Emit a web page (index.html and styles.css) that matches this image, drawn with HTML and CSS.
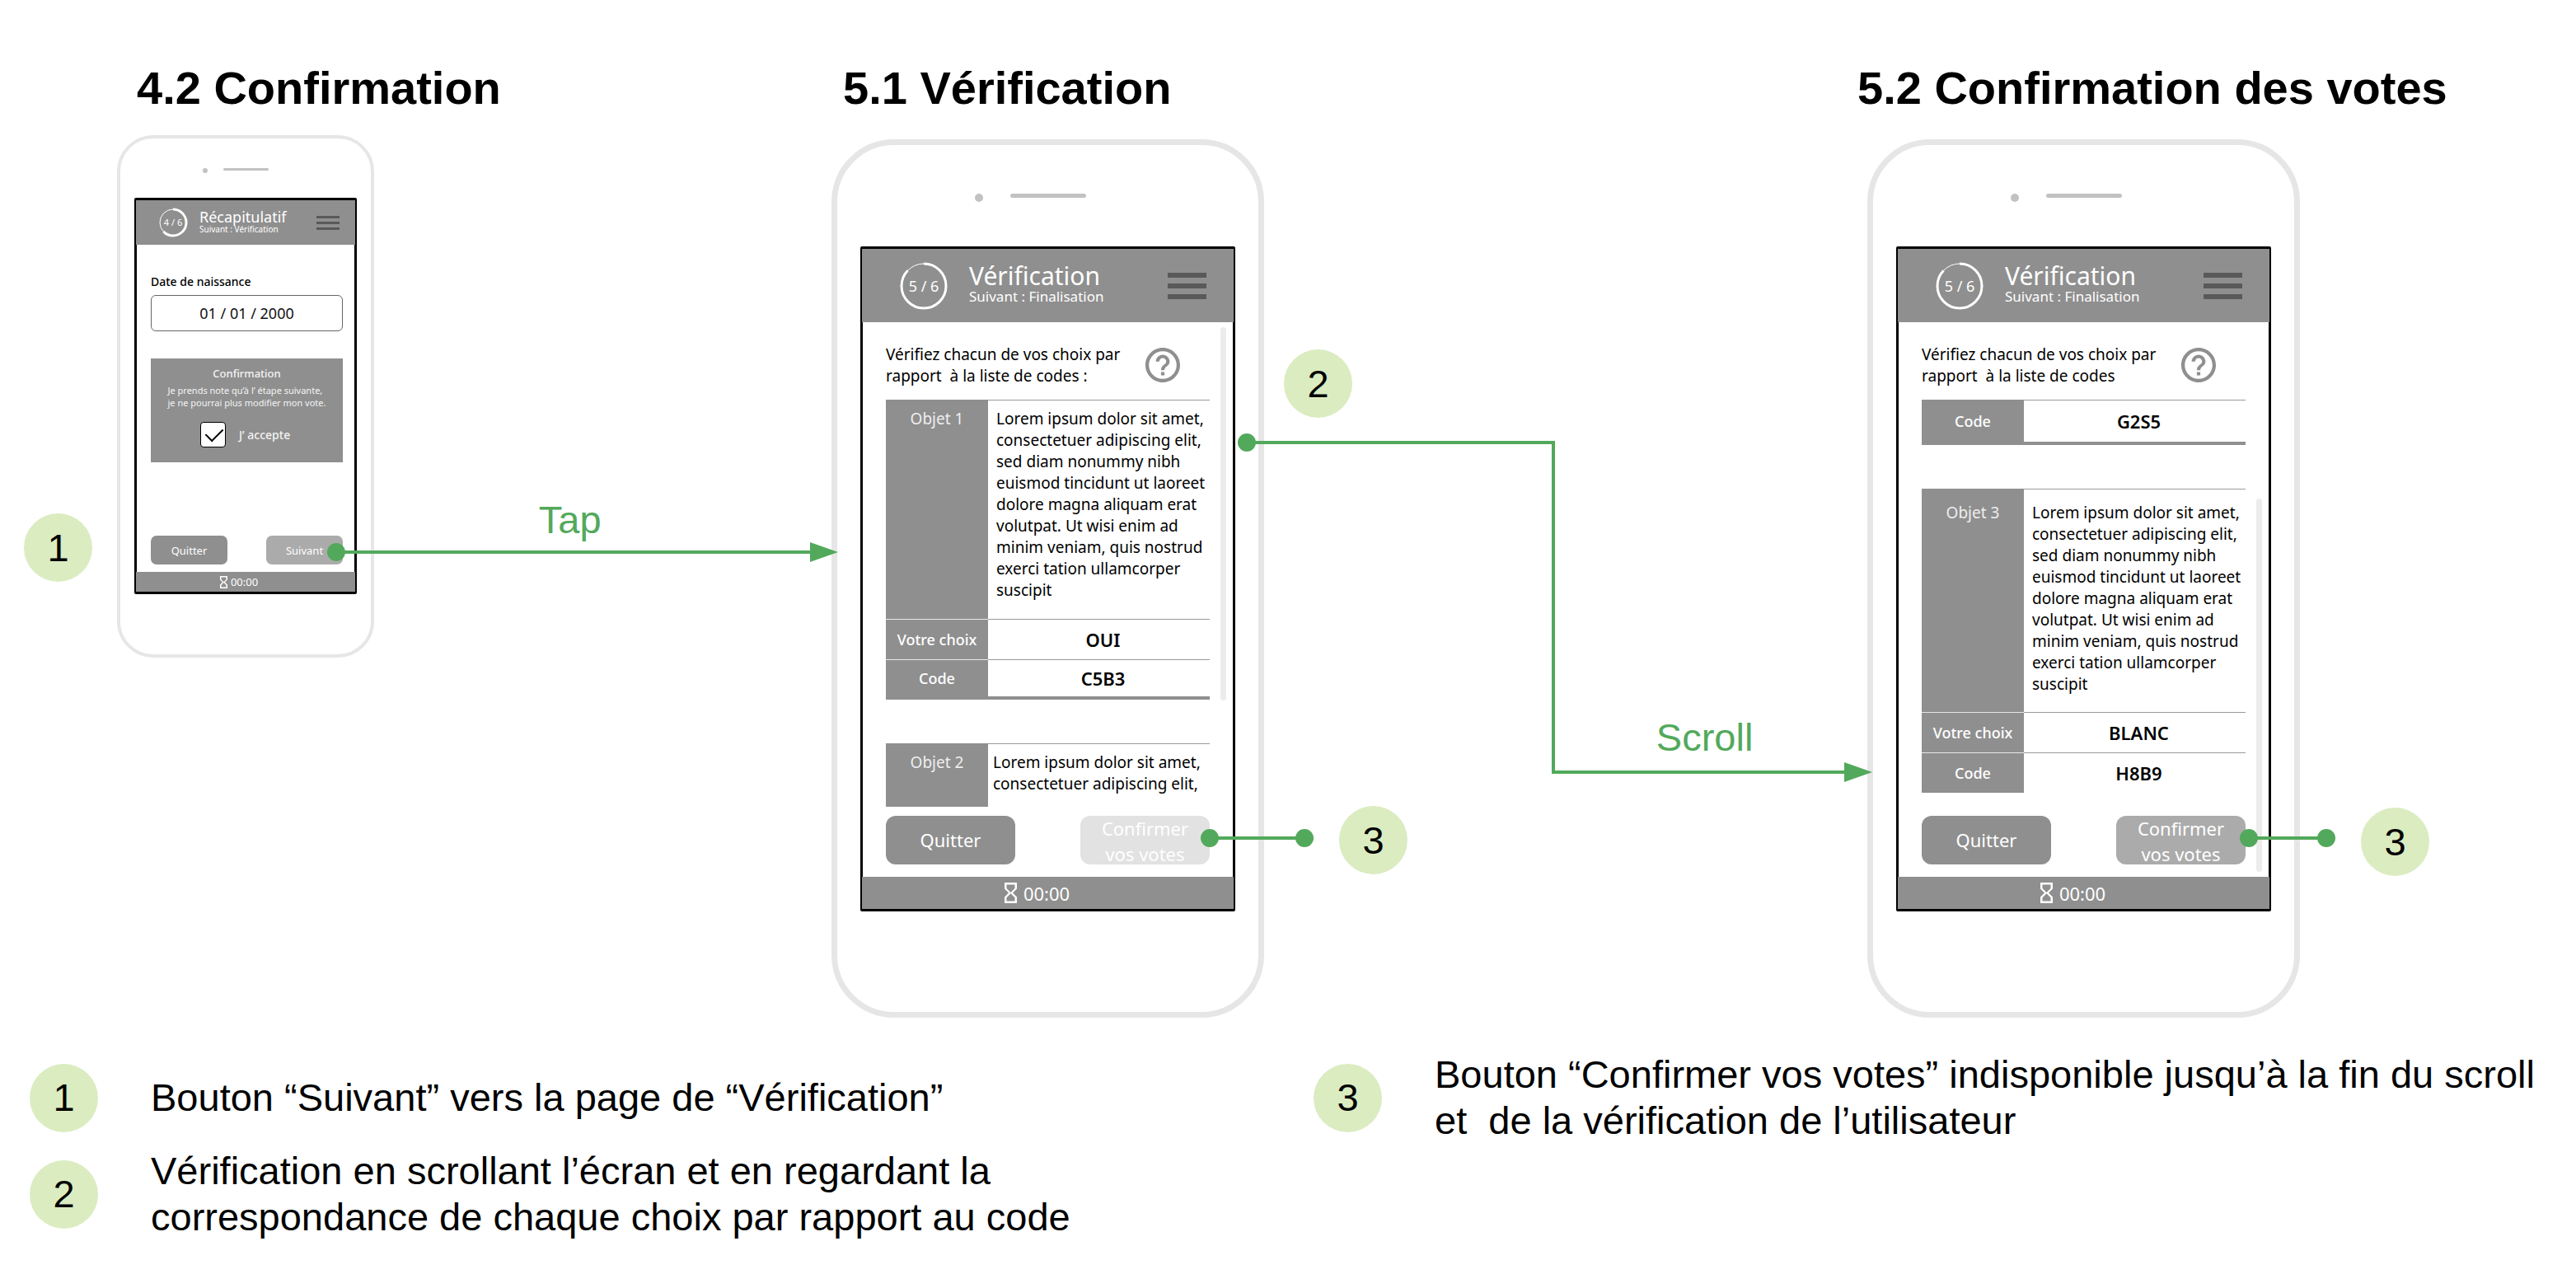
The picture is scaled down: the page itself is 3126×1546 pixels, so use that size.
FILE: index.html
```html
<!DOCTYPE html>
<html lang="fr">
<head>
<meta charset="utf-8">
<title>Parcours de vote : vérification</title>
<link rel="stylesheet" href="styles.css">
</head>
<body>
<svg width="0" height="0" class="defs" aria-hidden="true">
  <symbol id="help" viewBox="2 2 20 20"><path d="M11 18h2v-2h-2v2zm1-16C6.48 2 2 6.48 2 12s4.48 10 10 10 10-4.48 10-10S17.52 2 12 2zm0 18c-4.41 0-8-3.59-8-8s3.59-8 8-8 8 3.59 8 8-3.59 8-8 8zm0-14c-2.21 0-4 1.79-4 4h2c0-1.1.9-2 2-2s2 .9 2 2c0 2-3 1.75-3 5h2c0-2.25 3-2.5 3-5 0-2.21-1.79-4-4-4z"/></symbol>
  <symbol id="hourglass" viewBox="6 2 12 20"><path d="M6 2v6h.01L6 8.01 10 12l-4 4 .01.01H6V22h12v-5.99h-.01L18 16l-4-4 4-3.99-.01-.01H18V2H6zm10 14.5V20H8v-3.5l4-4 4 4zm-4-5l-4-4V4h8v3.5l-4 4z"/></symbol>
</svg>
<main>
  <div class="flow">
    <h2 class="title title-a">4.2 Confirmation</h2>
    <h2 class="title title-b">5.1 Vérification</h2>
    <h2 class="title title-c">5.2 Confirmation des votes</h2>

    <div class="lane lane-start"><span class="badge at-start">1</span></div>

    <section class="phone small">
      <div class="speaker"><i class="camera"></i><i class="slot"></i></div>
      <div class="screen">
        <header class="bar">
          <div class="step">
            <svg viewBox="0 0 36 36"><circle cx="18" cy="18" r="16" class="thin"/><circle cx="18" cy="18" r="16" class="thick" pathLength="360" stroke-dasharray="226 134" transform="rotate(-90 18 18)"/></svg>
            <span>4 / 6</span>
          </div>
          <div class="heading"><h3>Récapitulatif</h3><p>Suivant : Vérification</p></div>
          <button class="menu" aria-label="Menu"><i></i><i></i><i></i></button>
        </header>
        <div class="content">
          <label class="field-label" for="birth">Date de naissance</label>
          <input class="field" id="birth" type="text" value="01 / 01 / 2000">
          <div class="panel">
            <h4>Confirmation</h4>
            <p>Je prends note qu’à l’ étape suivante,<br>je ne pourrai plus modifier mon vote.</p>
            <label class="accept"><input type="checkbox" checked><span>J’ accepte</span></label>
          </div>
          <div class="actions"><button class="btn">Quitter</button><button class="btn next">Suivant</button></div>
        </div>
        <footer class="timer"><svg><use href="#hourglass"/></svg><span>00:00</span></footer>
      </div>
    </section>

    <div class="lane lane-tap">
      <div class="link tap"></div>
      <span class="gesture tap-text">Tap</span>
    </div>

    <section class="phone large">
      <div class="speaker"><i class="camera"></i><i class="slot"></i></div>
      <div class="screen">
        <header class="bar">
          <div class="step">
            <svg viewBox="0 0 60 60"><circle cx="30" cy="30" r="27" class="thin"/><circle cx="30" cy="30" r="27" class="thick" pathLength="360" stroke-dasharray="314 46" transform="rotate(-90 30 30)"/></svg>
            <span>5 / 6</span>
          </div>
          <div class="heading"><h3>Vérification</h3><p>Suivant : Finalisation</p></div>
          <button class="menu" aria-label="Menu"><i></i><i></i><i></i></button>
        </header>
        <div class="content">
          <div class="intro"><p>Vérifiez chacun de vos choix par<br>rapport&nbsp; à la liste de codes :</p><button class="help" aria-label="Aide"><svg><use href="#help"/></svg></button></div>
          <table class="vote closed">
            <tr class="object"><th>Objet 1</th><td>Lorem ipsum dolor sit amet,<br>consectetuer adipiscing elit,<br>sed diam nonummy nibh<br>euismod tincidunt ut laoreet<br>dolore magna aliquam erat<br>volutpat. Ut wisi enim ad<br>minim veniam, quis nostrud<br>exerci tation ullamcorper<br>suscipit</td></tr>
            <tr><th>Votre choix</th><td>OUI</td></tr>
            <tr><th>Code</th><td>C5B3</td></tr>
          </table>
          <table class="vote">
            <tr class="object cut"><th>Objet 2</th><td>Lorem ipsum dolor sit amet,<br>consectetuer adipiscing elit,</td></tr>
          </table>
          <div class="actions"><button class="btn">Quitter</button><button class="btn off" disabled>Confirmer<br>vos votes</button></div>
          <i class="scrollbar top"></i>
        </div>
        <footer class="timer"><svg><use href="#hourglass"/></svg><span>00:00</span></footer>
      </div>
    </section>

    <div class="lane lane-scroll">
      <span class="badge at-scroll">2</span>
      <div class="link down"></div>
      <div class="link across"></div>
      <span class="gesture scroll-text">Scroll</span>
      <div class="link note"></div>
      <span class="badge at-disabled">3</span>
    </div>

    <section class="phone large">
      <div class="speaker"><i class="camera"></i><i class="slot"></i></div>
      <div class="screen">
        <header class="bar">
          <div class="step">
            <svg viewBox="0 0 60 60"><circle cx="30" cy="30" r="27" class="thin"/><circle cx="30" cy="30" r="27" class="thick" pathLength="360" stroke-dasharray="314 46" transform="rotate(-90 30 30)"/></svg>
            <span>5 / 6</span>
          </div>
          <div class="heading"><h3>Vérification</h3><p>Suivant : Finalisation</p></div>
          <button class="menu" aria-label="Menu"><i></i><i></i><i></i></button>
        </header>
        <div class="content">
          <div class="intro"><p>Vérifiez chacun de vos choix par<br>rapport&nbsp; à la liste de codes</p><button class="help" aria-label="Aide"><svg><use href="#help"/></svg></button></div>
          <table class="vote closed">
            <tr class="tall"><th>Code</th><td>G2S5</td></tr>
          </table>
          <table class="vote">
            <tr class="object roomy"><th>Objet 3</th><td>Lorem ipsum dolor sit amet,<br>consectetuer adipiscing elit,<br>sed diam nonummy nibh<br>euismod tincidunt ut laoreet<br>dolore magna aliquam erat<br>volutpat. Ut wisi enim ad<br>minim veniam, quis nostrud<br>exerci tation ullamcorper<br>suscipit</td></tr>
            <tr><th>Votre choix</th><td>BLANC</td></tr>
            <tr><th>Code</th><td>H8B9</td></tr>
          </table>
          <div class="actions"><button class="btn">Quitter</button><button class="btn next">Confirmer<br>vos votes</button></div>
          <i class="scrollbar bottom"></i>
        </div>
        <footer class="timer"><svg><use href="#hourglass"/></svg><span>00:00</span></footer>
      </div>
    </section>

    <div class="lane lane-end">
      <div class="link note end"></div>
      <span class="badge at-confirm">3</span>
    </div>
  </div>

  <div class="legend">
    <ul>
      <li><span class="badge">1</span><p>Bouton “Suivant” vers la page de “Vérification”</p></li>
      <li><span class="badge">2</span><p>Vérification en scrollant l’écran et en regardant la<br>correspondance de chaque choix par rapport au code</p></li>
    </ul>
    <ul>
      <li><span class="badge">3</span><p>Bouton “Confirmer vos votes” indisponible jusqu’à la fin du scroll<br>et&nbsp; de la vérification de l’utilisateur</p></li>
    </ul>
  </div>
</main>
</body>
</html>
```

FILE: styles.css
```css
:root {
  --green: #52a95b;
  --badge: #dbecc1;
  --grey: #8f8f8f;
  --ui: "Noto Sans", "Open Sans", sans-serif;
  --text: "Liberation Sans", Arial, sans-serif;
}

* { box-sizing: border-box; }
body { margin: 0; background: #fff; color: #000; font-family: var(--text); }
h2, h3, h4, p, ul { margin: 0; padding: 0; }
ul { list-style: none; }
button { border: 0; padding: 0; background: none; font: inherit; color: inherit; }
svg { display: block; fill: currentColor; }
.defs { position: absolute; }

/* Diagram: phones separated by lanes that hold the connectors */
.flow {
  display: grid;
  grid-template-columns: 142px 312px 555fr 525px 732fr 525px 335px;
  grid-template-rows: 164px auto;
}
.title { grid-row: 1; padding-top: 76px; font-size: 56px; line-height: 62px; white-space: nowrap; }
.title-a { grid-column: 2 / 4; padding-left: 24px; }
.title-b { grid-column: 4 / 6; padding-left: 14px; }
.title-c { grid-column: 6 / 8; margin-left: -12px; }
.lane { grid-row: 2; position: relative; z-index: 1; }

.badge {
  flex: none;
  width: 83px; height: 83px;
  display: flex; align-items: center; justify-content: center;
  border-radius: 50%;
  background: var(--badge);
  font-size: 47px; line-height: 56px;
}
.lane .badge { position: absolute; }
.at-start { left: 29px; top: 459px; }
.at-scroll { left: 24px; top: 260px; }
.at-disabled { left: 91px; top: 814px; }
.at-confirm { left: 74px; top: 816px; }

.gesture { position: absolute; color: var(--green); font-size: 47px; line-height: 56px; }
.tap-text { left: 36%; top: 439px; }
.scroll-text { left: 65%; top: 703px; }

/* Connectors: a 4px line, a dot at the start, an arrow head or dot at the end */
.link { position: absolute; border: 0 solid var(--green); }
.link::before, .note::after {
  content: ""; position: absolute; left: -11px; top: -13px;
  width: 22px; height: 22px; border-radius: 50%; background: var(--green);
}
.tap { left: -46px; right: 10px; top: 504px; border-top-width: 4px; }
.tap::after, .across::after {
  content: ""; position: absolute; right: -18px; top: -14px;
  border: solid transparent; border-width: 12px 0 12px 34px; border-left-color: var(--green);
}
.down { left: -21px; right: calc(52% - 2px); top: 371px; height: 404px; border-width: 4px 4px 0 0; }
.across { left: 48%; right: 12px; top: 771px; border-top-width: 4px; }
.across::before { content: none; }
.note { left: -66px; top: 851px; width: 115px; border-top-width: 4px; }
.note::after { left: auto; right: -11px; }
.note.end { left: -62px; width: 94px; }

/* Phone shell */
.phone { grid-row: 2; align-self: start; border: 7px solid #e6e6e6; border-radius: 76px; padding: 0 28px 122px; margin-top: 5px; }
.speaker { position: relative; height: 123px; display: flex; justify-content: center; padding-top: 59px; }
.slot { width: 92px; height: 5px; border-radius: 3px; background: #c2c2c2; }
.camera { position: absolute; left: 139px; top: 59px; width: 10px; height: 10px; border-radius: 50%; background: #c2c2c2; }
.screen {
  min-height: 807px;
  display: flex; flex-direction: column;
  border: 3px solid #000; border-radius: 2px;
  font-family: var(--ui); font-size: 19px; line-height: 26px;
}
.bar { margin: 0 -1px; height: 89px; padding: 0 33px 0 45px; display: flex; align-items: center; background: var(--grey); color: #fff; }
.step { position: relative; width: 60px; height: 60px; display: flex; align-items: center; justify-content: center; font-size: 18px; }
.step svg { position: absolute; left: 0; top: 0; width: 100%; height: 100%; fill: none; stroke: #fff; }
.thin { stroke-width: 1px; }
.thick { stroke-width: 3px; }
.heading { flex: 1; padding: 0 0 4px 25px; }
.heading h3 { font-size: 30px; line-height: 30px; font-weight: 400; }
.heading p { font-size: 17px; line-height: 20px; }
.menu { display: grid; gap: 7px; width: 47px; }
.menu i { height: 6px; background: #595959; }

.content { position: relative; flex: 1; display: flex; flex-direction: column; padding: 0 28px 15px; }
.intro { display: flex; align-items: center; justify-content: space-between; padding: 26px 36px 16px 0; white-space: nowrap; }
.help { width: 42px; height: 42px; color: var(--grey); }
.help svg, .timer svg { width: 100%; height: 100%; }

.vote { width: 100%; border-collapse: separate; border-spacing: 0; table-layout: fixed; }
.vote + .vote { margin-top: 53px; }
.vote th { width: 124px; height: 49px; padding: 0; border-top: 1px solid #e8e8e8; background: var(--grey); color: #fff; font-weight: 500; font-size: 18px; }
.vote td { padding: 0 0 0 10px; border-top: 1px solid #9a9a9a; text-align: center; font-weight: 600; font-size: 22px; white-space: nowrap; }
.vote tr:first-child th { border-top-color: var(--grey); }
.vote.closed tr:last-child td, .vote.closed tr:last-child th { border-bottom: 4px solid var(--grey); }
.vote .object th, .vote .object td { height: 266px; padding-top: 9px; vertical-align: top; font-weight: 400; font-size: 19px; }
.vote .object td { text-align: left; }
.vote .object th { color: #eee; }
.vote .object.cut th, .vote .object.cut td { height: 77px; }
.vote .object.cut td { padding-left: 6px; }
.vote .object.roomy th, .vote .object.roomy td { height: 271px; padding-top: 15px; }
.vote .tall th { height: 55px; }

.actions { display: flex; justify-content: space-between; margin-top: auto; }
.btn { width: 157px; height: 59px; border-radius: 12px; background: var(--grey); color: #fff; font-size: 22px; line-height: 31px; }
.btn.next { background: #ababab; }
.btn.off { background: #e2e2e2; }
.scrollbar { position: absolute; right: 8px; width: 7px; height: 453px; border-radius: 4px; background: #ececec; }
.scrollbar.top { top: 6px; }
.scrollbar.bottom { bottom: 6px; }
.timer { margin: 0 -1px; height: 39px; display: flex; align-items: center; justify-content: center; gap: 8px; padding-right: 26px; background: var(--grey); color: #fff; font-size: 22px; }
.timer svg { width: 15px; height: 25px; }

/* Small phone */
.small { margin-top: 0; border-width: 4px; border-radius: 44px; padding: 0 17px 73px; }
.small .speaker { height: 72px; padding-top: 36px; }
.small .slot { width: 55px; height: 3px; }
.small .camera { left: 83px; top: 36px; width: 6px; height: 6px; }
.small .screen { min-height: 481px; font-size: 14px; line-height: 20px; }
.small .bar { height: 54px; padding: 0 19px 0 27px; }
.small .step { width: 36px; height: 36px; font-size: 11px; }
.small .heading { padding: 0 0 2px 14px; }
.small .heading h3 { font-size: 18px; line-height: 18px; }
.small .heading p { font-size: 10px; line-height: 12px; }
.small .menu { width: 28px; gap: 4px; }
.small .menu i { height: 3px; }
.small .content { padding: 35px 14px 9px 17px; }
.field-label { padding-bottom: 6px; font-weight: 500; line-height: 20px; }
.field { width: 100%; height: 44px; border: 1px solid #666; border-radius: 6px; background: #fff; color: #111; font: 18px/24px var(--ui); text-align: center; }
.panel { margin-top: 33px; height: 126px; padding-top: 8px; background: var(--grey); color: #f4f4f4; text-align: center; }
.panel h4 { font-size: 13px; line-height: 20px; font-weight: 500; }
.panel p { display: inline-block; text-align: left; font-size: 11px; line-height: 15px; padding-top: 3px; white-space: nowrap; }
.accept { display: flex; align-items: center; gap: 16px; padding: 14px 0 0 60px; font-weight: 500; }
.accept input { appearance: none; margin: 0; width: 31px; height: 31px; border: 1px solid #000; border-radius: 4px; background: #fff; position: relative; }
.accept input:checked::after { content: ""; position: absolute; left: 6px; top: 6px; width: 18px; height: 10px; border: solid #000; border-width: 0 0 2px 2px; transform: rotate(-45deg); }
.small .btn { width: 93px; height: 35px; border-radius: 7px; font-size: 13px; line-height: 20px; }
.small .timer { height: 24px; gap: 4px; padding-right: 16px; font-size: 13px; }
.small .timer svg { width: 9px; height: 15px; }

/* Legend */
.legend { display: grid; grid-template-columns: 1fr 1fr; gap: 26px; padding: 41px 0 0 36px; font-size: 47px; line-height: 56px; white-space: nowrap; }
.legend ul { display: grid; gap: 5px; align-content: start; }
.legend li { display: flex; align-items: center; gap: 64px; min-height: 112px; }
```
